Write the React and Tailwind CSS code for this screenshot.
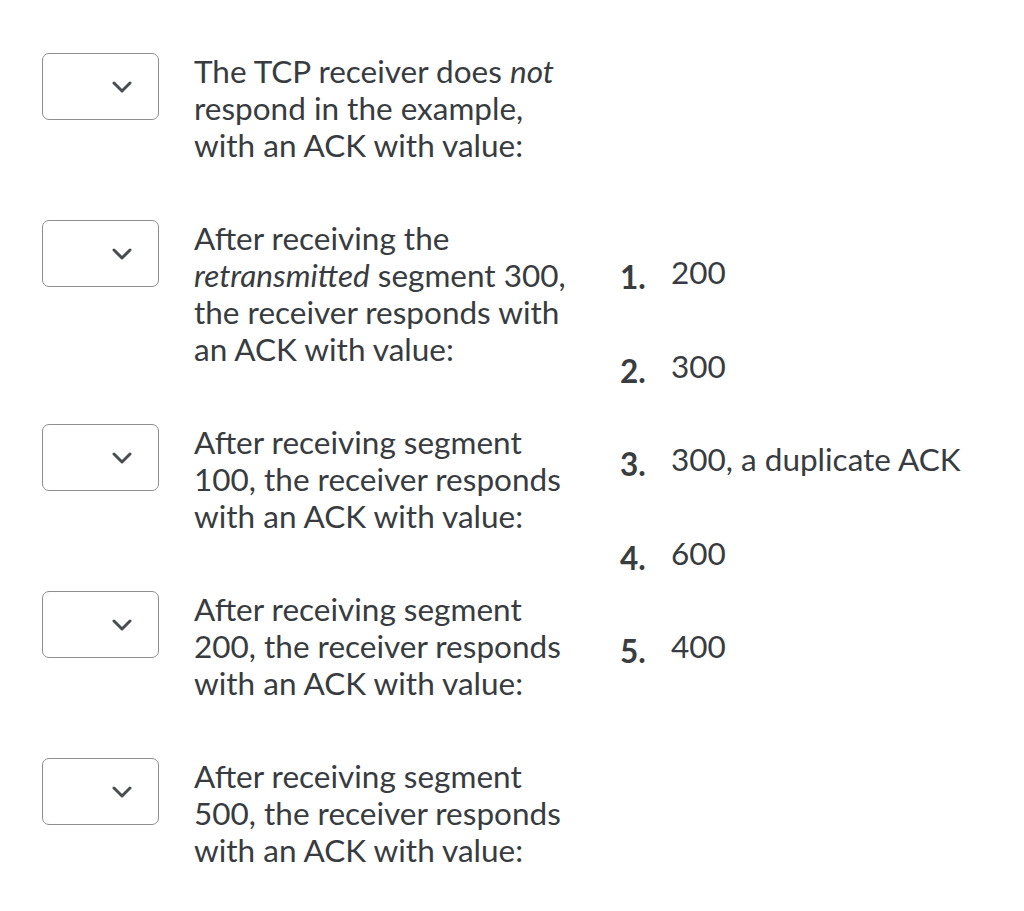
import React from "react";

const questions = [
  [<>The TCP receiver does <em>not</em> respond in the example, with an ACK with value:</>],
  [<>After receiving the <em>retransmitted</em> segment 300, the receiver responds with an ACK with value:</>],
  [<>After receiving segment 100, the receiver responds with an ACK with value:</>],
  [<>After receiving segment 200, the receiver responds with an ACK with value:</>],
  [<>After receiving segment 500, the receiver responds with an ACK with value:</>],
];

const answers = ["200", "300", "300, a duplicate ACK", "600", "400"];

const Chevron = () => (
  <svg width="20" height="12" viewBox="0 0 20 12" fill="none">
    <path d="M2 2l8 8 8-8" stroke="#4a4d50" strokeWidth="3" strokeLinecap="round" strokeLinejoin="round" />
  </svg>
);

export default function App() {
  return (
    <div
      className="flex bg-white min-h-[911px] pl-[42px] pt-[53px] text-[#383c40]"
      style={{ fontFamily: "Lato, 'Open Sans', sans-serif" }}
    >
      {/* matching rows */}
      <div className="flex flex-col gap-[56px]">
        {questions.map((q, i) => (
          <div key={i} className="flex items-start gap-[35px]">
            <div className="w-[117px] h-[67px] shrink-0 rounded-[7px] border border-[#8e8e8e] bg-white flex items-center justify-end pr-[26px]">
              <Chevron />
            </div>
            <p className="w-[388px] text-[31.5px] leading-[37px]">{q[0]}</p>
          </div>
        ))}
      </div>

      {/* answer list */}
      <ol className="self-center flex flex-col gap-[51.5px] ml-[38px] mt-[-40px]">
        {answers.map((a, i) => (
          <li key={i} className="flex items-start text-[31.5px] leading-[37px]">
            <span className="w-[51px] font-bold pt-[5px] text-[#3a3d40]">{i + 1}.</span>
            <span>{a}</span>
          </li>
        ))}
      </ol>
    </div>
  );
}
